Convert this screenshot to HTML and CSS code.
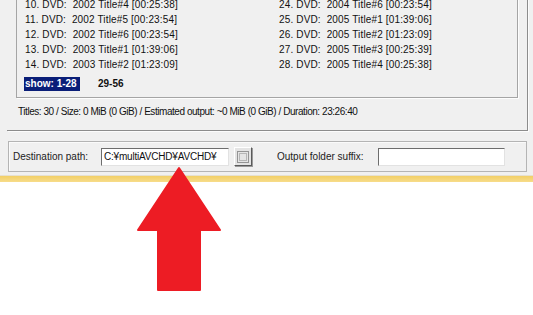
FILE: index.html
```html
<!DOCTYPE html>
<html>
<head>
    <title>multiAVCHD</title>
    <meta name="viewport" content="width=device-width, initial-scale=1">
    <link rel="stylesheet" href="styles.css">
</head>
<body>
    <div class="window">
        <div class="tab-panel">
            <div class="title-list">
                <div class="columns">
                    <ul class="col">
                        <li>10. DVD:&nbsp; 2002 Title#4 [00:25:38]</li>
                        <li>11. DVD:&nbsp; 2002 Title#5 [00:23:54]</li>
                        <li>12. DVD:&nbsp; 2002 Title#6 [00:23:54]</li>
                        <li>13. DVD:&nbsp; 2003 Title#1 [01:39:06]</li>
                        <li>14. DVD:&nbsp; 2003 Title#2 [01:23:09]</li>
                    </ul>
                    <ul class="col">
                        <li>24. DVD:&nbsp; 2004 Title#6 [00:23:54]</li>
                        <li>25. DVD:&nbsp; 2005 Title#1 [01:39:06]</li>
                        <li>26. DVD:&nbsp; 2005 Title#2 [01:23:09]</li>
                        <li>27. DVD:&nbsp; 2005 Title#3 [00:25:39]</li>
                        <li>28. DVD:&nbsp; 2005 Title#4 [00:25:38]</li>
                    </ul>
                </div>
                <div class="pages">
                    <span class="page current">show: 1-28</span>
                    <span class="page">29-56</span>
                </div>
            </div>
            <p class="summary">Titles: 30 / Size: 0 MiB (0 GiB) / Estimated output: ~0 MiB (0 GiB) / Duration: 23:26:40</p>
        </div>

        <div class="dest-group">
            <label class="dest-label">Destination path:</label>
            <input class="field dest-field" type="text" value="C:&yen;multiAVCHD&yen;AVCHD&yen;">
            <button class="browse" type="button">
                <svg width="12" height="12" viewBox="0 0 12 12">
                    <rect x="0.5" y="0.5" width="11" height="11" fill="none" stroke="#444" stroke-width="1" stroke-dasharray="1 1"/>
                    <rect x="2.5" y="2.5" width="7" height="7" fill="none" stroke="#888" stroke-width="1" stroke-dasharray="1 1"/>
                </svg>
            </button>
            <label class="suffix-label">Output folder suffix:</label>
            <input class="field suffix-field" type="text" value="">
        </div>
        <div class="stripe"></div>
    </div>

    <!-- red arrow pointing at the destination path -->
    <svg class="arrow" width="533" height="315" viewBox="0 0 533 315">
        <polygon points="179,168 220,230 200,230 200,290 158,290 158,230 138,230"
                 fill="#ed1c24" stroke="#ed1c24" stroke-width="2" stroke-linejoin="round"/>
    </svg>
</body>
</html>
```

FILE: styles.css
```css
body {
    margin: 0;
    background: #ffffff;
    font-family: "Liberation Sans", Arial, sans-serif;
    font-size: 10px;
    color: #111;
    overflow: hidden;
}
.window {
    background: #f0f0f0;
    overflow: hidden;
}
.tab-panel {
    margin-left: 7px;
    width: 502px;
    padding: 0 9px 11px 9px;
    border-right: 1px solid #8c8c8c;
    border-bottom: 1px solid #8c8c8c;
    box-shadow: 1px 1px 0 #fcfcfc;
}
.title-list {
    margin-top: -9px;
    width: 500px;
    padding: 5px 0 6px 0;
    border: 1px solid #a5a5a5;
    box-shadow: 1px 1px 0 #fdfdfd;
}
.columns {
    display: grid;
    grid-template-columns: 254px 1fr;
}
.col {
    list-style: none;
    margin: 0;
    padding: 0 0 0 8px;
    letter-spacing: 0.15px;
}
.col li {
    height: 15px;
    line-height: 15px;
    white-space: pre;
}
.pages {
    display: flex;
    gap: 17px;
    margin-top: 5px;
    padding-left: 7px;
}
.page {
    font-weight: bold;
    height: 14px;
    line-height: 14px;
    padding: 0 1px;
}
.page.current {
    background: #0a1e78;
    color: #fff;
    width: 54px;
}
.summary {
    margin: 7px 0 0 2px;
    height: 14px;
    line-height: 14px;
    letter-spacing: -0.45px;
}
.dest-group {
    display: flex;
    align-items: center;
    margin: 10px 0 0 8px;
    width: 513px;
    padding: 5px 0 5px 4px;
    border: 1px solid #b4b4b4;
    box-shadow: inset 1px 1px 0 #fafafa;
    color: #222;
}
.dest-label {
    width: 88px;
}
.field {
    box-sizing: border-box;
    height: 18px;
    margin: 0;
    padding: 0 2px;
    border: 1px solid #e2e2e2;
    border-top-color: #6d6d6d;
    border-left-color: #6d6d6d;
    background: #fff;
    font-family: inherit;
    font-size: 10px;
    letter-spacing: -0.2px;
    color: #111;
}
.dest-field {
    width: 128px;
}
.browse {
    box-sizing: border-box;
    width: 18px;
    height: 19px;
    margin: 0 0 0 5px;
    padding: 0;
    display: flex;
    align-items: center;
    justify-content: center;
    background: #e4e4e4;
    border: 1px solid #fff;
    border-right-color: #5a5a5a;
    border-bottom-color: #5a5a5a;
    box-shadow: 1px 1px 0 #9a9a9a;
}
.suffix-label {
    margin-left: 25px;
    width: 101px;
}
.suffix-field {
    width: 127px;
}
.stripe {
    margin-top: 3px;
    height: 6px;
    border-top: 1px solid #e6e0d0;
    background: linear-gradient(#f2cf66, #f7dc8a);
}
.arrow {
    position: absolute;
    left: 0;
    top: 0;
    pointer-events: none;
}
```
